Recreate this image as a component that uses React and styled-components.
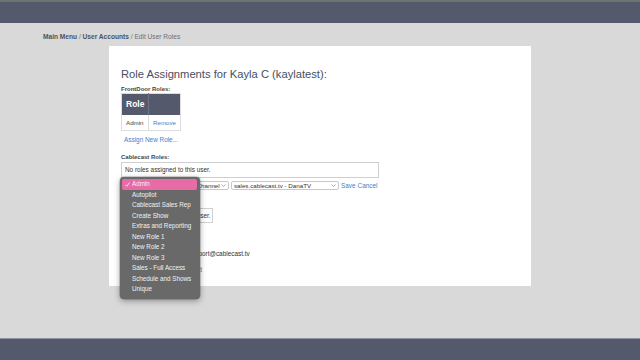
import React from "react";
import styled, { createGlobalStyle } from "styled-components";

const GlobalStyle = createGlobalStyle`
  html, body { margin: 0; padding: 0; }
  body {
    background: #d9d9d9;
    font-family: "Liberation Sans", Arial, Helvetica, sans-serif;
    color: #333;
  }
`;

const Page = styled.div`
  width: 640px;
  height: 360px;
  display: flex;
  flex-direction: column;
  overflow: hidden;
`;

const TopBar = styled.header`
  height: 23px;
  box-sizing: border-box;
  background: #545a6b;
  border-top: 2px solid #6b7670;
  flex: none;
`;

const Main = styled.main`
  flex: 1;
  display: flex;
  flex-direction: column;
`;

const Breadcrumb = styled.nav`
  margin-top: 10px;
  padding-left: 43px;
  font-size: 6.6px;
  line-height: 8px;
  color: #6a6e78;
`;

const Crumb = styled.span`
  font-weight: ${(p) => (p.$link ? 700 : 400)};
  color: ${(p) => (p.$link ? "#4d5260" : "#6a6e78")};
`;

const Card = styled.section`
  position: relative;
  margin: 5px 0 0 109px;
  width: 422px;
  height: 240px;
  box-sizing: border-box;
  background: #fff;
  padding: 21px 12px 0;
  display: flex;
  flex-direction: column;
  align-items: flex-start;
`;

const Title = styled.h1`
  margin: 0;
  font-size: 11.2px;
  line-height: 14px;
  font-weight: 400;
  color: #484e5e;
`;

const SectionLabel = styled.div`
  margin-top: ${(p) => p.$mt}px;
  font-size: 6px;
  line-height: 8px;
  font-weight: 700;
  color: #444;
`;

const RoleTable = styled.table`
  border-collapse: collapse;
  border: 1px solid #dcdcdc;
  font-size: 6.2px;
`;

const HeadCell = styled.th`
  background: #545a6b;
  color: #fff;
  height: 21px;
  padding: 0 0 0 4px;
  box-sizing: border-box;
  text-align: left;
  font-size: 8.5px;
  font-weight: 700;
  width: ${(p) => p.$w}px;
  border-right: ${(p) => (p.$divider ? "1px solid #6e7485" : "none")};
`;

const Cell = styled.td`
  height: 15px;
  padding: 0 0 0 4px;
  color: ${(p) => (p.$link ? "#3d7fcb" : "#444")};
  border-right: ${(p) => (p.$divider ? "1px solid #dcdcdc" : "none")};
`;

const TextLink = styled.a`
  display: block;
  margin-top: ${(p) => p.$mt || 0}px;
  padding-left: ${(p) => p.$pl || 0}px;
  font-size: 6.4px;
  line-height: 8px;
  color: #3d7fcb;
  text-decoration: none;
`;

const InfoBox = styled.div`
  margin-top: ${(p) => p.$mt}px;
  width: ${(p) => p.$w}px;
  height: ${(p) => p.$h}px;
  box-sizing: border-box;
  border: 1px solid #cfcfcf;
  display: flex;
  align-items: center;
  padding-left: 3px;
  font-size: 6.4px;
  color: #333;
`;

const EditRow = styled.div`
  margin-top: 3px;
  display: flex;
  align-items: center;
  gap: 2px;
  height: 9px;
`;

const SelectBox = styled.div`
  width: ${(p) => p.$w}px;
  height: 9px;
  box-sizing: border-box;
  border: 1px solid #c8c8c8;
  border-radius: 2px;
  display: flex;
  align-items: center;
  justify-content: space-between;
  padding: 0 2px 0 2px;
  font-size: 6.2px;
  color: #333;
  background: #fff;
`;

const Actions = styled.div`
  display: flex;
  gap: 2px;
  font-size: 6.4px;
  color: #3d7fcb;
`;

const InfoLine = styled.div`
  margin-top: ${(p) => p.$mt}px;
  font-size: 6.4px;
  line-height: 8px;
  color: #333;
`;

const Menu = styled.ul`
  position: absolute;
  left: 11px;
  top: 131px;
  width: 80px;
  margin: 0;
  padding: 2px 3px 4px 2px;
  box-sizing: border-box;
  list-style: none;
  background: #696969;
  border-radius: 4px;
  box-shadow: 0 2px 6px rgba(0, 0, 0, 0.35), 0 0 0 0.5px rgba(0, 0, 0, 0.3);
`;

const MenuItem = styled.li`
  position: relative;
  height: 10.5px;
  line-height: 10.5px;
  padding-left: 10px;
  font-size: 6.3px;
  color: #f2f2f2;
  border-radius: 2px;
  background: ${(p) => (p.$selected ? "#e66ba6" : "transparent")};
`;

const Check = styled.svg`
  position: absolute;
  left: 3px;
  top: 3px;
`;

const Footer = styled.footer`
  height: 22px;
  box-sizing: border-box;
  background: #545a6b;
  border-top: 1px solid #8d94a4;
  flex: none;
`;

const Chevron = () => (
  <svg width="5" height="3" viewBox="0 0 5 3">
    <polyline points="0.5,0.5 2.5,2.5 4.5,0.5" fill="none" stroke="#888" strokeWidth="0.7" />
  </svg>
);

const roles = [
  "Admin",
  "Autopilot",
  "Cablecast Sales Rep",
  "Create Show",
  "Extras and Reporting",
  "New Role 1",
  "New Role 2",
  "New Role 3",
  "Sales - Full Access",
  "Schedule and Shows",
  "Unique",
];

export default function App() {
  return (
    <>
      <GlobalStyle />
      <Page>
        <TopBar />
        <Main>
          <Breadcrumb>
            <Crumb $link>Main Menu</Crumb> / <Crumb $link>User Accounts</Crumb> /{" "}
            <Crumb>Edit User Roles</Crumb>
          </Breadcrumb>
          <Card>
            <Title>Role Assignments for Kayla C (kaylatest):</Title>
            <SectionLabel $mt={4}>FrontDoor Roles:</SectionLabel>
            <RoleTable>
              <thead>
                <tr>
                  <HeadCell $w={27} $divider>Role</HeadCell>
                  <HeadCell $w={32}></HeadCell>
                </tr>
              </thead>
              <tbody>
                <tr>
                  <Cell $divider>Admin</Cell>
                  <Cell $link>Remove</Cell>
                </tr>
              </tbody>
            </RoleTable>
            <TextLink $mt={5} $pl={3}>Assign New Role...</TextLink>
            <SectionLabel $mt={9}>Cablecast Roles:</SectionLabel>
            <InfoBox $mt={1} $w={258} $h={16}>No roles assigned to this user.</InfoBox>
            <EditRow>
              <SelectBox $w={62}>
                Admin <Chevron />
              </SelectBox>
              <SelectBox $w={44}>
                All Channel <Chevron />
              </SelectBox>
              <SelectBox $w={108}>
                sales.cablecast.tv - DanaTV <Chevron />
              </SelectBox>
              <Actions>
                <span>Save</span>
                <span>Cancel</span>
              </Actions>
            </EditRow>
            <InfoBox $mt={18} $w={92} $h={15}>No roles assigned to this user.</InfoBox>
            <InfoLine $mt={27}>Primary Contact Email: support@cablecast.tv</InfoLine>
            <TextLink $mt={8}>Return to User Accounts List</TextLink>

            <Menu>
              {roles.map((r, i) => (
                <MenuItem key={r} $selected={i === 0}>
                  {i === 0 && (
                    <Check width="5" height="5" viewBox="0 0 5 5">
                      <polyline
                        points="0.5,2.8 1.8,4.2 4.5,0.6"
                        fill="none"
                        stroke="#fff"
                        strokeWidth="0.8"
                      />
                    </Check>
                  )}
                  {r}
                </MenuItem>
              ))}
            </Menu>
          </Card>
        </Main>
        <Footer />
      </Page>
    </>
  );
}
